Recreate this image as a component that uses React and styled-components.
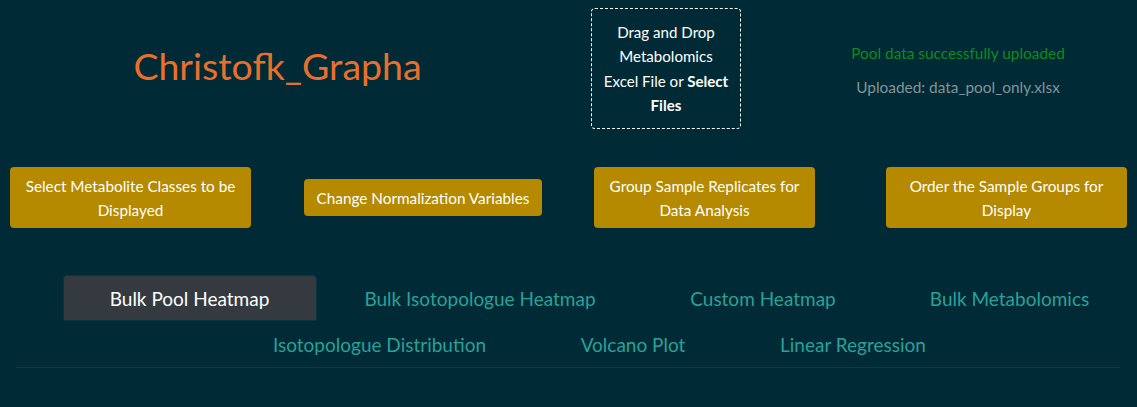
import React from "react";
import styled, { createGlobalStyle } from "styled-components";

const GlobalStyle = createGlobalStyle`
  body {
    margin: 0;
    background: #002b36;
    font-family: Lato, "Open Sans", sans-serif;
  }
`;

const Page = styled("div")({
  width: "1137px",
  height: "407px",
  background: "#002b36",
  overflow: "hidden",
});

const Header = styled("div")({
  display: "flex",
  alignItems: "center",
  paddingTop: "8px",
});

const TitleCol = styled("div")({
  width: "555px",
  textAlign: "center",
  marginTop: "-6px",
});

const Title = styled("h1")({
  margin: 0,
  fontFamily: "Lato, sans-serif",
  fontWeight: 400,
  fontSize: "37.5px",
  lineHeight: "44px",
  color: "#ea6f2a",
});

const UploadBox = styled("div")({
  boxSizing: "border-box",
  width: "150px",
  height: "121px",
  marginLeft: "36px",
  border: "1px dashed #ffffff",
  borderRadius: "4px",
  display: "flex",
  alignItems: "center",
  justifyContent: "center",
  textAlign: "center",
  color: "#ffffff",
  fontSize: "15.1px",
  lineHeight: "24.5px",
  whiteSpace: "nowrap",
  b: { fontWeight: 700 },
});

const StatusCol = styled("div")({
  flex: 1,
  paddingLeft: "38px",
  textAlign: "center",
  fontSize: "15.4px",
  lineHeight: "20px",
});

const StatusLine = styled("div")(({ $tone }) => ({
  color: $tone === "ok" ? "#0f8a1f" : "#839496",
  marginTop: $tone === "ok" ? "2px" : "14px",
}));

const ButtonRow = styled("div")({
  display: "flex",
  alignItems: "center",
  marginTop: "38px",
  paddingLeft: "10px",
});

const ActionButton = styled("button")(({ $width, $offset, $tall }) => ({
  boxSizing: "border-box",
  width: `${$width}px`,
  height: $tall ? "61px" : "37px",
  marginLeft: `${$offset}px`,
  padding: "0 6px",
  border: "none",
  borderRadius: "4px",
  background: "#b58900",
  color: "#ffffff",
  fontFamily: "Lato, sans-serif",
  fontSize: "15.3px",
  lineHeight: "24px",
  whiteSpace: "nowrap",
  cursor: "pointer",
}));

const Tabs = styled("div")({
  marginTop: "47px",
});

const TabRow = styled("div")({
  display: "flex",
  justifyContent: "center",
  paddingLeft: "62px",
});

const Tab = styled("div")(({ $width, $active }) => ({
  boxSizing: "border-box",
  width: `${$width}px`,
  height: "46px",
  display: "flex",
  alignItems: "center",
  justifyContent: "center",
  borderRadius: "4px 4px 0 0",
  border: $active ? "1px solid #0a3440" : "1px solid transparent",
  background: $active ? "#343a40" : "transparent",
  color: $active ? "#ffffff" : "#2aa198",
  fontSize: "19px",
  whiteSpace: "nowrap",
  cursor: "pointer",
}));

const Divider = styled("div")({
  height: "1px",
  margin: "0 17px 0 16px",
  background: "#0c3a47",
});

const tabRows = [
  [
    { label: "Bulk Pool Heatmap", width: 254, active: true },
    { label: "Bulk Isotopologue Heatmap", width: 327 },
    { label: "Custom Heatmap", width: 239 },
    { label: "Bulk Metabolomics", width: 254 },
  ],
  [
    { label: "Isotopologue Distribution", width: 308 },
    { label: "Volcano Plot", width: 199 },
    { label: "Linear Regression", width: 241 },
  ],
];

export default function App() {
  return (
    <Page>
      <GlobalStyle />
      <Header>
        <TitleCol>
          <Title>Christofk_Grapha</Title>
        </TitleCol>
        <UploadBox>
          <div>
            Drag and Drop
            <br />
            Metabolomics
            <br />
            Excel File or <b>Select</b>
            <br />
            <b>Files</b>
          </div>
        </UploadBox>
        <StatusCol>
          <StatusLine $tone="ok">Pool data successfully uploaded</StatusLine>
          <StatusLine>Uploaded: data_pool_only.xlsx</StatusLine>
        </StatusCol>
      </Header>

      <ButtonRow>
        <ActionButton $width={241} $offset={0} $tall>
          Select Metabolite Classes to be
          <br />
          Displayed
        </ActionButton>
        <ActionButton $width={238} $offset={53}>
          Change Normalization Variables
        </ActionButton>
        <ActionButton $width={221} $offset={52} $tall>
          Group Sample Replicates for
          <br />
          Data Analysis
        </ActionButton>
        <ActionButton $width={241} $offset={71} $tall>
          Order the Sample Groups for
          <br />
          Display
        </ActionButton>
      </ButtonRow>

      <Tabs>
        {tabRows.map((row, i) => (
          <TabRow key={i}>
            {row.map((t) => (
              <Tab key={t.label} $width={t.width} $active={t.active}>
                {t.label}
              </Tab>
            ))}
          </TabRow>
        ))}
        <Divider />
      </Tabs>
    </Page>
  );
}
